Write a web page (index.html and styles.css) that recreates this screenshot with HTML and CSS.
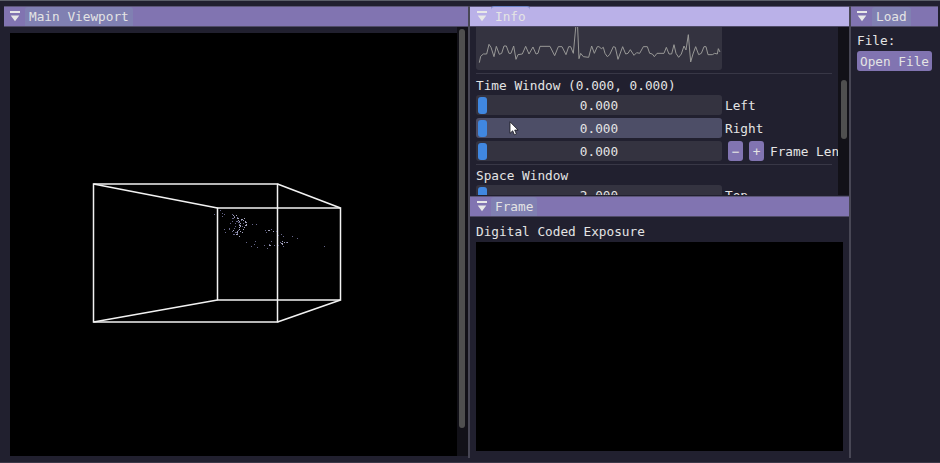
FILE: index.html
```html
<!DOCTYPE html>
<html lang="en">
<head>
<meta charset="utf-8">
<title>Event Viewer</title>
<link rel="stylesheet" href="styles.css">
</head>
<body>
<main class="dock">
  <section class="panel viewport">
    <header class="bar"><svg class="fold" viewBox="0 0 10 11"><path d="M0 0h10v2H0zM.7 4.5h8.6L5 10.3z"/></svg><span class="tab">Main Viewport</span></header>
    <div class="viewport-body">
      <svg class="scene" viewBox="10 33 447 423">
        <g class="wire">
          <path d="M93.5 184H277.5V322H93.5Z"/>
          <path d="M217.5 208H340.5V300H217.5Z"/>
          <path d="M93.5 184L217.5 208M277.5 184L340.5 208M93.5 322L217.5 300M277.5 322L340.5 300"/>
        </g>
        <path class="dots bright" d="M233 215.5h1m2 0h1m-3 2h1m2 1h2m2 1h2m-5 1h1m4 0h1m-5 2h1m5 0h1m-7 2h1m6 0h1m-8 1h2m4 0h2m-8 2h1m4 0h1m-6 2h1m3 0h1m-7 2h1m2 0h1m-6 1h3m-2 2h2m5 -5h1m-5 7h1m2-4h1m1-14h1m-12 12h1m-2 1h1m13-9h1M239 221.5h1m0 2h1m-1 3h1m-2 3h1m5-8h1m0 3h1M268 230.5h2m3 1h1M281 243.5h2m1-1h1m2 0h1m-6 2h1m-1 -3h1M269 245.5h2"/>
        <path class="dots" d="M214 214.5h1m5-4h1m1 3h1m-1 3h1m1-2h1M232 214.5h1m1 2h1m-3 2h2m3-1h1m-6 4h1m3 0h2m-8 2h1m4 0h1m-1 3h1m-7 2h1m4 0h1m-6 1h1m2 2h1m3 1h1m-4 2h2m-10-2h1m12-10h2m1-2h1m1 3h1m-2 3h1m-5 4h1m-2 3h1m1-9h1m-5 8h1M224 229.5h1M252 224.5h1m3 0h1M265 230.5h1m0 2h1m4-3h1m4 2h1M246 242.5h1m4 4h1m2-2h1m0-3h1m1 6h1m6-2h1m2 3h1m1-4h1m1-3h1m2 4h1M278 235.5h1m2-1h1m1 2h1m8 0h1m4 2h1m-18 4h1m5 0h1m-9 3h1m4 1h1M324 246.5h1"/>
      </svg>
      <div class="track tall"><div class="thumb"></div></div>
    </div>
  </section>

  <section class="panel middle">
    <div class="info">
      <header class="bar active"><svg class="fold" viewBox="0 0 10 11"><path d="M0 0h10v2H0zM.7 4.5h8.6L5 10.3z"/></svg><span class="tab">Info</span></header>
      <div class="info-body">
        <div class="controls">
          <svg class="plot" viewBox="0 0 246 43"><polyline transform="translate(-2 -3) scale(.33333)" points="16,116 20,97 28,90 38,90 45,61 51,70 60,98 67,67 76,91 83,88 90,66 97,66 105,88 111,88 119,66 126,106 132,92 145,90 155,67 165,90 177,69 186,90 192,88 198,67 228,67 242,95 253,68 264,68 276,92 284,68 290,68 298,88 307,-10 310,-10 315,104 320,88 328,98 344,100 353,66 361,88 370,68 375,68 382,74 388,70 393,88 400,98 407,92 418,68 424,70 432,106 446,68 455,90 462,88 469,77 480,94 488,86 497,88 508,68 520,68 527,88 535,90 541,98 549,88 570,88 577,70 585,90 593,90 600,62 606,88 614,100 622,90 630,66 636,78 643,32 650,114 657,90 665,68 674,92 682,88 690,68 696,68 702,92 715,92 722,88 730,90 733,74 738,84"/></svg>
          <hr>
          <p class="label">Time Window (0.000, 0.000)</p>
          <div class="row"><div class="slider"><i class="grab"></i>0.000</div><span>Left</span></div>
          <div class="row"><div class="slider hover"><i class="grab"></i>0.000</div><span>Right</span></div>
          <div class="row"><div class="slider"><i class="grab"></i>0.000</div><button class="step">−</button><button class="step">+</button><span class="long">Frame Length</span></div>
          <hr class="second">
          <p class="label">Space Window</p>
          <div class="row"><div class="slider"><i class="grab"></i>2.000</div><span>Top</span></div>
        </div>
        <div class="track short"><div class="thumb"></div></div>
      </div>
    </div>
    <div class="frame">
      <header class="bar"><svg class="fold" viewBox="0 0 10 11"><path d="M0 0h10v2H0zM.7 4.5h8.6L5 10.3z"/></svg><span class="tab">Frame</span></header>
      <p class="frame-label">Digital Coded Exposure</p>
      <div class="frame-canvas"></div>
    </div>
  </section>

  <section class="panel load">
    <header class="bar"><svg class="fold" viewBox="0 0 10 11"><path d="M0 0h10v2H0zM.7 4.5h8.6L5 10.3z"/></svg><span class="tab">Load</span></header>
    <p class="file-label">File:</p>
    <button class="open">Open File</button>
  </section>
</main>
<svg class="cursor" viewBox="0 0 10 15"><path d="M1 .8V12.3L3.7 9.8L5.4 13.8L7.4 12.9L5.7 9.1H9.1Z"/></svg>
</body>
</html>
```
FILE: styles.css
```css
* { box-sizing: border-box; }
body {
  margin: 0;
  width: 940px;
  height: 463px;
  overflow: hidden;
  background: #21202f;
  color: #e4e4e4;
  font: 12.76px/20px "DejaVu Sans Mono", "Liberation Mono", monospace;
}
p { margin: 0; }
button {
  border: 0;
  padding: 0;
  background: #8174b1;
  color: #e4e4e4;
  font: inherit;
}
.dock {
  display: flex;
  height: 463px;
  padding: 5px 2px 4px 4px;
  border-top: 1px solid #5b5e68;
  border-bottom: 1px solid #3b3848;
}
.panel { height: 452px; }
.viewport { width: 464px; }
.middle {
  width: 383px;
  border: solid #484755;
  border-width: 0 2px;
}
.load { width: 87px; }
.bar {
  display: flex;
  align-items: center;
  height: 21px;
  border-top: 1px solid #5c5678;
  border-bottom: 1px solid #4f4b66;
  padding-left: 6px;
  background: #8174b1;
}
.bar.active { background: #bab1e8; }
.fold { width: 10px; height: 11px; margin-right: 5px; fill: #e8e8e8; }
.tab {
  height: 19px;
  line-height: 20px;
  padding: 0 4px;
  border-radius: 3px 3px 0 0;
  background: #8080b2;
  white-space: nowrap;
}
.middle .bar { padding-left: 7px; }
.middle .fold { margin-right: 4px; }
.active .tab { background: none; box-shadow: 0 -1px #6d83c5; }

.viewport-body { display: flex; padding-left: 6px; height: 429px; }
.scene { width: 447px; height: 423px; margin-top: 6px; background: #000; }
.wire { fill: none; stroke: #f2f2f2; stroke-width: 1.5; }
.dots { stroke: #65658a; stroke-width: 1; }
.dots.bright { stroke: #a5a5bf; }

.track { background: #121118; }
.tall { width: 11px; padding: 2px 3px 0 2px; }
.thumb { border-radius: 3px; background: #4f4f4f; }
.tall .thumb { width: 6px; height: 399px; }
.short { width: 11px; padding: 53px 2px 0 3px; }
.short .thumb { width: 6px; height: 59px; }

.info { height: 190px; }
.info-body { display: flex; height: 168px; overflow: hidden; }
.controls { width: 368px; padding-left: 6px; overflow: hidden; }
.plot { display: block; width: 246px; height: 43px; border-radius: 0 0 3px 3px; background: #343340; }
.plot polyline { fill: none; stroke: #999997; stroke-width: 3; }
hr { width: 356px; height: 1px; margin: 3px 0 1px; border: 0; background: #383746; }
hr.second { margin: 1px 0 0; }
.label { height: 20px; line-height: 21px; }
.row { display: flex; height: 20px; margin-bottom: 3px; line-height: 22px; white-space: nowrap; }
.row span { margin-left: 3px; }
.slider {
  position: relative;
  flex: none;
  width: 246px;
  border-radius: 3px;
  background: #343340;
  text-align: center;
}
.slider.hover { background: #4d4e67; }
.grab {
  position: absolute;
  left: 2px;
  top: 2px;
  width: 9px;
  height: 17px;
  border-radius: 3px;
  background: #4087e0;
}
.step { flex: none; width: 15px; height: 20px; margin-left: 6px; border-radius: 3px; }
.row .long { margin-left: 6px; }

.frame-label { height: 25px; padding: 5px 0 0 6px; }
.frame-canvas { width: 367px; height: 209px; margin-left: 6px; background: #000; }

.file-label { padding: 4px 0 0 6px; }
.open { display: block; width: 75px; height: 20px; margin-left: 6px; padding-top: 1px; border-radius: 3px; }
.cursor {
  position: absolute;
  left: 509px;
  top: 121px;
  width: 10px;
  height: 15px;
  fill: #fff;
  stroke: #15151d;
  stroke-width: .8;
}
```
